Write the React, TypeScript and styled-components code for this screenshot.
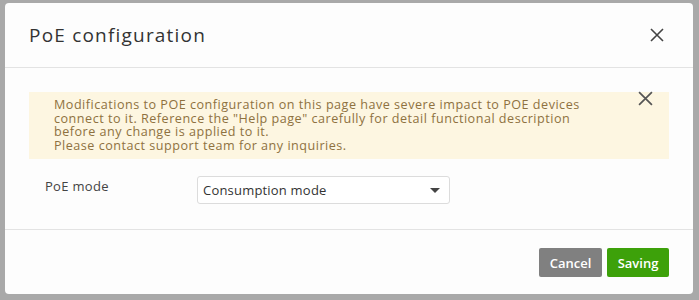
import React from "react";
import styled, { createGlobalStyle } from "styled-components";

const Global = createGlobalStyle`
  html, body { margin: 0; padding: 0; background: #a9a9a9; }
  body { font-family: "Open Sans", "Noto Sans", sans-serif; width: 699px; height: 300px; overflow: hidden; }
`;

const Backdrop = styled.div`
  width: 699px;
  height: 300px;
  padding: 3px 6px 6px 5px;
  box-sizing: border-box;
  display: flex;
`;

const Modal = styled.div`
  flex: 1;
  background: #fdfdfd;
  border-radius: 4px;
  display: flex;
  flex-direction: column;
`;

const Header = styled.div`
  height: 65px;
  box-sizing: border-box;
  border-bottom: 1px solid #e3e3e3;
  display: flex;
  align-items: center;
  justify-content: space-between;
  padding: 0 29px 0 24px;
`;

const Title = styled.h1`
  margin: 0;
  font-size: 19px;
  font-weight: 400;
  color: #333;
  letter-spacing: 1.2px;
`;

const IconButton = styled.button`
  border: 0;
  background: transparent;
  padding: 0;
  display: flex;
  cursor: pointer;
`;

const Body = styled.div`
  flex: 1;
  border-bottom: 1px solid #e3e3e3;
  padding: 24px 24px 0 24px;
  display: flex;
  flex-direction: column;
`;

const Alert = styled.div`
  background: #fdf6e1;
  padding: 6px 16px 5px 25px;
  position: relative;
  color: #8e7140;
  font-size: 12.6px;
  letter-spacing: 0.5px;
  height: 67px;
  box-sizing: border-box;
`;

const AlertLine = styled.div`
  height: 13.5px;
  line-height: 13.5px;
  white-space: nowrap;
`;

const AlertClose = styled(IconButton)`
  position: absolute;
  top: -1px;
  right: 16px;
`;

const Row = styled.div`
  display: flex;
  align-items: flex-start;
  margin-top: 17px;
  padding-left: 16px;
`;

const Label = styled.div`
  width: 152px;
  font-size: 13px;
  color: #444;
  letter-spacing: 0.3px;
  padding-top: 1px;
`;

const Select = styled.div`
  width: 253px;
  height: 28px;
  box-sizing: border-box;
  border: 1px solid #dcdcdc;
  border-radius: 3px;
  background: #fff;
  display: flex;
  align-items: center;
  justify-content: space-between;
  padding: 0 9px 0 5px;
  font-size: 13px;
  letter-spacing: 0.2px;
  color: #333;
`;

const Caret = styled.span`
  width: 0;
  height: 0;
  border-left: 5px solid transparent;
  border-right: 5px solid transparent;
  border-top: 5px solid #444;
`;

const Footer = styled.div`
  height: 64px;
  display: flex;
  align-items: center;
  justify-content: flex-end;
  gap: 5px;
  padding: 0 24px 0 0;
`;

const Button = styled.button<{ $variant: "gray" | "green" }>`
  height: 29px;
  border: 0;
  border-radius: 2px;
  padding: 0 8px;
  background: ${(p) => (p.$variant === "gray" ? "#808080" : "#3da10a")};
  color: #fff;
  font-family: "Open Sans", "Noto Sans", sans-serif;
  font-weight: 600;
  font-size: 13px;
  min-width: ${(p) => (p.$variant === "gray" ? "63px" : "62px")};
  margin-top: 1px;
`;

const CloseIcon = ({ size, color }: { size: number; color: string }) => (
  <svg width={size} height={size} viewBox="0 0 14 14">
    <path d="M1 1 L13 13 M13 1 L1 13" stroke={color} strokeWidth="1.6" fill="none" />
  </svg>
);

const alertLines = [
  "Modifications to POE configuration on this page have severe impact to POE devices",
  'connect to it. Reference the "Help page" carefully for detail functional description',
  "before any change is applied to it.",
  "Please contact support team for any inquiries.",
];

export default function App() {
  return (
    <>
      <Global />
      <Backdrop>
        <Modal>
          <Header>
            <Title>PoE configuration</Title>
            <IconButton aria-label="Close">
              <CloseIcon size={14} color="#444" />
            </IconButton>
          </Header>
          <Body>
            <Alert>
              {alertLines.map((l) => (
                <AlertLine key={l}>{l}</AlertLine>
              ))}
              <AlertClose aria-label="Dismiss">
                <CloseIcon size={15} color="#555" />
              </AlertClose>
            </Alert>
            <Row>
              <Label>PoE mode</Label>
              <Select>
                <span>Consumption mode</span>
                <Caret />
              </Select>
            </Row>
          </Body>
          <Footer>
            <Button $variant="gray">Cancel</Button>
            <Button $variant="green">Saving</Button>
          </Footer>
        </Modal>
      </Backdrop>
    </>
  );
}
